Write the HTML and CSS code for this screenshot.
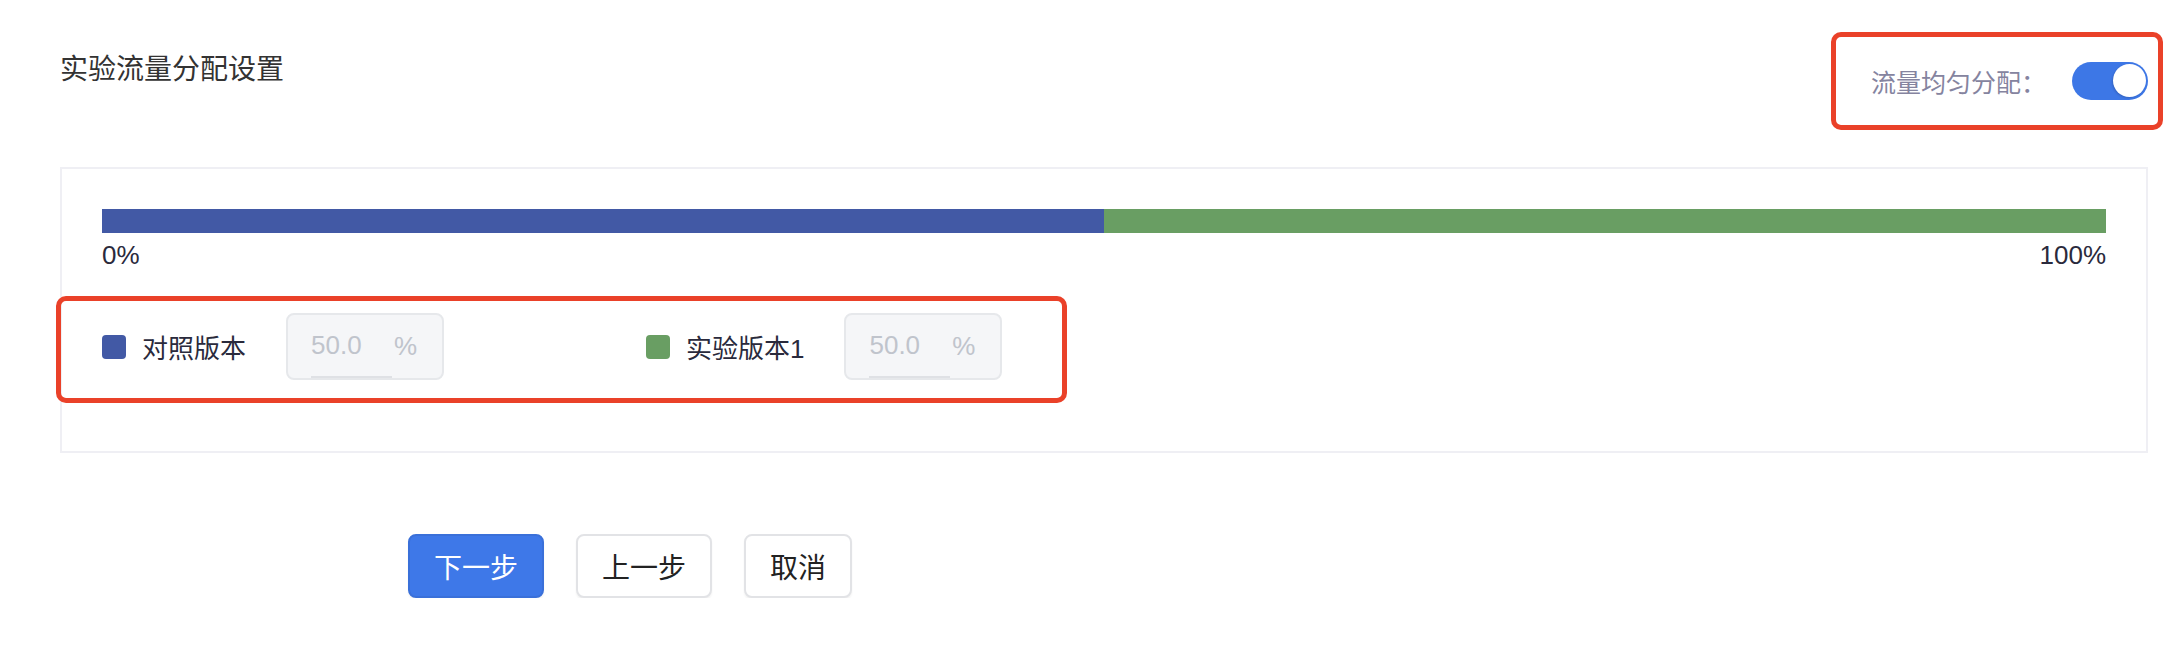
FILE: index.html
```html
<!DOCTYPE html>
<html lang="zh-CN">
<head>
    <meta charset="UTF-8">
    <meta name="viewport" content="width=device-width, initial-scale=1.0">
    <title>实验流量分配设置</title>
    <link rel="stylesheet" href="styles.css">
</head>
<body>
    <div class="page">
        <!-- Header -->
        <div class="header">
            <h3 class="title">实验流量分配设置</h3>
            <div class="even-switch">
                <span class="even-label">流量均匀分配：</span>
                <span class="switch"><span class="knob"></span></span>
            </div>
        </div>

        <!-- Traffic panel -->
        <div class="panel">
            <div class="bar">
                <div class="seg seg-blue" style="width: 50%;"></div>
                <div class="seg seg-green" style="width: 50%;"></div>
            </div>
            <div class="scale">
                <span>0%</span>
                <span>100%</span>
            </div>

            <div class="legend">
                <div class="legend-item">
                    <span class="dot dot-blue"></span>
                    <span class="name">对照版本</span>
                    <div class="pct-input">
                        <span class="val">50.0</span>
                        <span class="suffix">%</span>
                    </div>
                </div>
                <div class="legend-item">
                    <span class="dot dot-green"></span>
                    <span class="name">实验版本1</span>
                    <div class="pct-input">
                        <span class="val">50.0</span>
                        <span class="suffix">%</span>
                    </div>
                </div>
            </div>
        </div>

        <!-- Actions -->
        <div class="actions">
            <button class="btn btn-primary">下一步</button>
            <button class="btn">上一步</button>
            <button class="btn">取消</button>
        </div>
    </div>
</body>
</html>
```

FILE: styles.css
```css
body {
    margin: 0;
    font-family: "Liberation Sans", "Noto Sans CJK SC", sans-serif;
    color: #2a2a3c;
    background: #fff;
}
.page {
    padding: 0 32px 0 60px;
}
.header {
    display: flex;
    justify-content: space-between;
    align-items: flex-start;
    height: 167px;
    box-sizing: border-box;
    padding-top: 48px;
}
.title {
    margin: 0;
    font-size: 28px;
    line-height: 44px;
    font-weight: normal;
    color: #333;
}
.even-switch {
    position: relative;
    display: flex;
    align-items: center;
    height: 40px;
    margin-top: 13px;
}
.even-switch::after {
    content: "";
    position: absolute;
    left: -40px;
    right: -15px;
    top: -29px;
    bottom: -29px;
    border: 5px solid #ea4129;
    border-radius: 10px;
}
.even-label {
    font-size: 25px;
    color: #85849f;
    margin-right: 26px;
}
.switch {
    position: relative;
    width: 76px;
    height: 38px;
    border-radius: 19px;
    background: #3d77e6;
}
.knob {
    position: absolute;
    top: 2px;
    right: 2px;
    width: 33px;
    height: 33px;
    border-radius: 50%;
    background: #fff;
    box-shadow: -1px 1px 2px rgba(0, 0, 0, 0.15);
}
.panel {
    border: 2px solid #efeff4;
    padding: 40px;
}
.bar {
    display: flex;
    height: 24px;
}
.seg-blue {
    background: #4259a5;
}
.seg-green {
    background: #699e63;
}
.scale {
    display: flex;
    justify-content: space-between;
    margin-top: 4px;
    font-size: 26px;
    line-height: 36px;
    color: #2a2a3c;
}
.legend {
    position: relative;
    display: flex;
    align-items: center;
    margin-top: 40px;
    margin-bottom: 31px;
}
.legend::after {
    content: "";
    position: absolute;
    left: -46px;
    top: -17px;
    width: 1011px;
    height: 107px;
    box-sizing: border-box;
    border: 5px solid #ea4129;
    border-radius: 10px;
}
.legend-item {
    display: flex;
    align-items: center;
    width: 544px;
}
.dot {
    width: 24px;
    height: 24px;
    border-radius: 4px;
    margin-right: 16px;
}
.dot-blue {
    background: #4259a5;
}
.dot-green {
    background: #699e63;
}
.name {
    font-size: 26px;
    margin-right: 40px;
}
.pct-input {
    display: flex;
    align-items: stretch;
    width: 158px;
    height: 67px;
    box-sizing: border-box;
    padding: 0 25px 0 23px;
    border: 2px solid #e6e8eb;
    border-radius: 8px;
    background: #f5f6f8;
    font-size: 26px;
    color: #c0c4cc;
}
.val {
    display: flex;
    align-items: center;
    width: 81px;
    border-bottom: 2px solid #dfe1e5;
}
.suffix {
    display: flex;
    align-items: center;
    margin-left: auto;
}
.actions {
    display: flex;
    gap: 32px;
    margin-top: 81px;
    padding-left: 348px;
}
.btn {
    height: 64px;
    padding: 0 24px;
    font-family: inherit;
    font-size: 28px;
    color: #222;
    background: #fff;
    border: 2px solid #e2e3e6;
    border-radius: 8px;
    box-shadow: 0 2px 2px rgba(0, 0, 0, 0.05);
    cursor: pointer;
}
.btn-primary {
    color: #fff;
    background: #3e78e8;
    border-color: #3a70d9;
}
```
